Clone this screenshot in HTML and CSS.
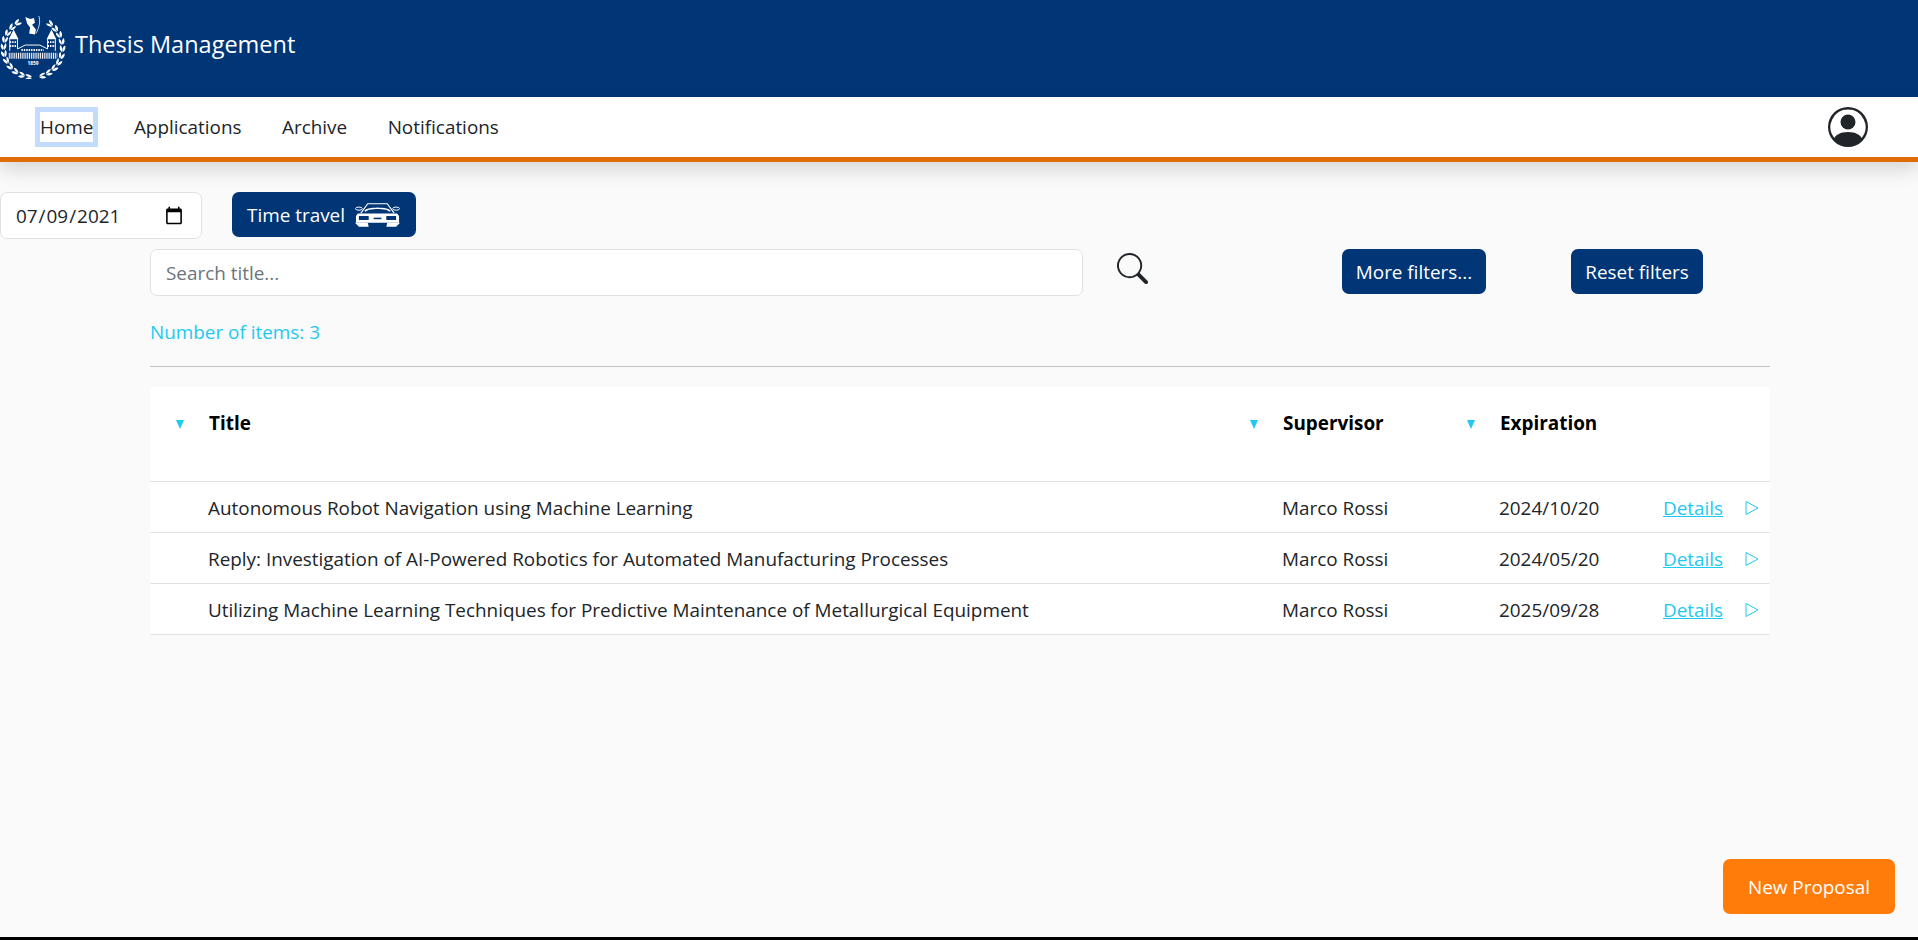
FILE: index.html
```html
<!DOCTYPE html>
<html lang="en">
<head>
  <meta charset="UTF-8">
  <meta name="viewport" content="width=device-width, initial-scale=1.0">
  <title>Thesis Management</title>
  <link rel="stylesheet" href="styles.css">
</head>

<body>
  <header class="brand-bar">
    <svg class="logo" viewBox="0 0 70 66" fill="none" stroke="#fff" aria-label="Logo">
      <defs>
        <path id="leaf" d="M34 3 C36.5 .4 39 .6 41 1.6 C39 4 36.5 4.4 34 3 Z M34 4 C36.5 3.6 39.5 4.4 41 6.4 C38.5 7.4 35.5 6.6 34 4 Z" fill="#fff" stroke="none"/>
      </defs>
      <!-- wreath -->
      <g>
        <use href="#leaf" transform="rotate(-38 34 34)"/>
        <use href="#leaf" transform="rotate(-52 34 34)"/>
        <use href="#leaf" transform="rotate(-66 34 34)"/>
        <use href="#leaf" transform="rotate(-80 34 34)"/>
        <use href="#leaf" transform="rotate(-94 34 34)"/>
        <use href="#leaf" transform="rotate(-108 34 34)"/>
        <use href="#leaf" transform="rotate(-122 34 34)"/>
        <use href="#leaf" transform="rotate(-136 34 34)"/>
        <use href="#leaf" transform="rotate(-150 34 34)"/>
        <use href="#leaf" transform="rotate(-164 34 34)"/>
        <use href="#leaf" transform="rotate(-178 34 34)"/>
        <use href="#leaf" transform="rotate(168 34 34) scale(-1 1) translate(-68 0)"/>
        <use href="#leaf" transform="rotate(154 34 34) scale(-1 1) translate(-68 0)"/>
        <use href="#leaf" transform="rotate(140 34 34) scale(-1 1) translate(-68 0)"/>
        <use href="#leaf" transform="rotate(126 34 34) scale(-1 1) translate(-68 0)"/>
        <use href="#leaf" transform="rotate(112 34 34) scale(-1 1) translate(-68 0)"/>
        <use href="#leaf" transform="rotate(98 34 34) scale(-1 1) translate(-68 0)"/>
        <use href="#leaf" transform="rotate(84 34 34) scale(-1 1) translate(-68 0)"/>
        <use href="#leaf" transform="rotate(70 34 34) scale(-1 1) translate(-68 0)"/>
        <use href="#leaf" transform="rotate(56 34 34) scale(-1 1) translate(-68 0)"/>
        <use href="#leaf" transform="rotate(42 34 34) scale(-1 1) translate(-68 0)"/>
      </g>
      <!-- figure on top -->
      <path d="M26 2 L31 4 L35 3 L36 8 L33 10 L37 15 L36 20 L30 19 L31 13 L28 9 Z" fill="#fff" stroke="none"/>
      <path d="M40 1 C41.5 6 41 12 37 19" stroke-width=".8"/>
      <!-- building -->
      <path d="M9 25 L14 15 L19 25 Z M48 25 L53 15 L58 25 Z" fill="#fff" stroke="none"/>
      <path d="M10 25 V37 M18 25 V35 L26 31 H41 L49 35 V25 M57 25 V37" stroke-width="1"/>
      <path d="M10 28 H18 M49 28 H57 M10 32 H18 M49 32 H57 M22 36 H45" stroke-width="2" stroke-dasharray="1.5 1"/>
      <path d="M9 42 H59" stroke-width="6" stroke-dasharray="1 .9"/>
      <text x="34" y="52" class="logo-year">1859</text>
    </svg>
    <span class="brand-name">Thesis Management</span>
  </header>

  <nav class="main-nav">
    <ul class="nav-links">
      <li><a class="nav-link active" href="#">Home</a></li>
      <li><a class="nav-link" href="#">Applications</a></li>
      <li><a class="nav-link" href="#">Archive</a></li>
      <li><a class="nav-link" href="#">Notifications</a></li>
    </ul>
    <svg class="user-icon" viewBox="0 0 16 16" fill="#212529" aria-label="Account">
      <path d="M11 6a3 3 0 1 1-6 0 3 3 0 0 1 6 0"/>
      <path fill-rule="evenodd" d="M0 8a8 8 0 1 1 16 0A8 8 0 0 1 0 8m8-7a7 7 0 0 0-5.468 11.37C3.242 11.226 4.805 10 8 10s4.757 1.225 5.468 2.37A7 7 0 0 0 8 1"/>
    </svg>
  </nav>

  <main class="content">
    <div class="time-row">
      <input class="form-input date-input" type="date" value="2021-07-09">
      <button class="btn time-btn" type="button">
        Time travel
        <svg class="car-icon" viewBox="0 0 48 26" fill="none" stroke="#fff" stroke-width="1.2" aria-hidden="true">
          <path d="M7 11 L14 1.5 H34 L41 11"/>
          <path d="M11 9 C16 5 20 7 24 6 C28 7 32 5 37 9" stroke-width="1.5"/>
          <ellipse cx="5" cy="6.5" rx="3.5" ry="1.6" stroke-width="1"/>
          <ellipse cx="43" cy="6.5" rx="3.5" ry="1.6" stroke-width="1"/>
          <path d="M4 11.5 H44 L46 14 V21 H2 V14 Z" fill="#fff" stroke="none"/>
          <path d="M5 14 H15 V18 H5 Z M33 14 H43 V18 H33 Z" fill="#003576" stroke="none"/>
          <path d="M20 16.5 H28" stroke="#003576" stroke-width="1.6"/>
          <path d="M1 21 H14 L15 25 H5 Z M34 21 H47 L43 25 H33 Z" fill="#fff" stroke="none"/>
        </svg>
      </button>
    </div>

    <div class="search-row">
      <input class="form-input search-input" type="text" placeholder="Search title...">
      <svg class="search-icon" viewBox="0 0 16 16" fill="#212529" aria-label="Search">
        <path d="M11.742 10.344a6.5 6.5 0 1 0-1.397 1.398h-.001q.044.06.098.115l3.85 3.85a1 1 0 0 0 1.415-1.414l-3.85-3.85a1 1 0 0 0-.115-.1zM12 6.5a5.5 5.5 0 1 1-11 0 5.5 5.5 0 0 1 11 0"/>
      </svg>
      <button class="btn more-btn" type="button">More filters...</button>
      <button class="btn reset-btn" type="button">Reset filters</button>
    </div>

    <p class="item-count">Number of items: 3</p>
    <hr class="divider">

    <section class="proposals">
      <div class="table-head">
        <div class="head-cell"><span class="sort-arrow"></span>Title</div>
        <div class="head-cell"><span class="sort-arrow"></span>Supervisor</div>
        <div class="head-cell"><span class="sort-arrow"></span>Expiration</div>
      </div>

      <div class="table-row">
        <span class="cell-title">Autonomous Robot Navigation using Machine Learning</span>
        <span>Marco Rossi</span>
        <span>2024/10/20</span>
        <span class="cell-actions"><a href="#">Details</a><svg class="play-icon" viewBox="0 0 14 16"><path d="M1 1.5 L13 8 L1 14.5 Z"/></svg></span>
      </div>
      <div class="table-row">
        <span class="cell-title">Reply: Investigation of AI-Powered Robotics for Automated Manufacturing Processes</span>
        <span>Marco Rossi</span>
        <span>2024/05/20</span>
        <span class="cell-actions"><a href="#">Details</a><svg class="play-icon" viewBox="0 0 14 16"><path d="M1 1.5 L13 8 L1 14.5 Z"/></svg></span>
      </div>
      <div class="table-row">
        <span class="cell-title">Utilizing Machine Learning Techniques for Predictive Maintenance of Metallurgical Equipment</span>
        <span>Marco Rossi</span>
        <span>2025/09/28</span>
        <span class="cell-actions"><a href="#">Details</a><svg class="play-icon" viewBox="0 0 14 16"><path d="M1 1.5 L13 8 L1 14.5 Z"/></svg></span>
      </div>
    </section>
  </main>

  <button class="new-proposal" type="button">New Proposal</button>
</body>
</html>
```

FILE: styles.css
```css
:root {
  --blue: #003576;
  --orange: #e06c08;
  --cyan: #1fc9f2;
  --text: #212529;
  --border: #dee2e6;
}

* {
  margin: 0;
  padding: 0;
  box-sizing: border-box;
}

html {
  background: #000;
}

body {
  font-family: "Open Sans", sans-serif;
  font-size: 18.9px;
  color: var(--text);
  background: #fafafa;
  height: 937px;
  overflow: hidden;
  position: relative;
}

.brand-bar {
  height: 97px;
  background: var(--blue);
  display: flex;
  align-items: center;
  padding-bottom: 3px;
}

.logo {
  width: 68px;
  height: 64px;
  margin-right: 7px;
  flex-shrink: 0;
}

.logo-year {
  fill: #fff;
  stroke: none;
  font-size: 5px;
  font-weight: 700;
  text-anchor: middle;
}

.brand-name {
  color: #fff;
  font-size: 23.5px;
  margin-bottom: 7px;
}

.main-nav {
  height: 65px;
  background: #fff;
  border-bottom: 5px solid var(--orange);
  box-shadow: 0 8px 18px rgba(0, 0, 0, 0.14);
  display: flex;
  align-items: center;
  justify-content: space-between;
  padding: 0 50px 0 40px;
  position: relative;
}

.nav-links {
  list-style: none;
  display: flex;
  gap: 40.5px;
}

.nav-link {
  display: block;
  color: var(--text);
  text-decoration: none;
  line-height: 30px;
}

.nav-link.active {
  outline: 5px solid #c3dbff;
}

.user-icon {
  width: 40px;
  height: 40px;
}

.content {
  padding-top: 30px;
}

.time-row {
  display: flex;
  gap: 30px;
}

.form-input {
  height: 47px;
  background: #fff;
  border: 1px solid var(--border);
  border-radius: 7px;
  font-family: inherit;
  font-size: 18.9px;
  color: var(--text);
  padding: 0 15px;
}

.date-input {
  width: 202px;
  padding: 0 17px 0 14px;
}

.date-input::-webkit-calendar-picker-indicator {
  width: 20px;
  height: 20px;
  margin: 0;
  padding: 0;
}

.btn {
  height: 45px;
  background: var(--blue);
  border: none;
  border-radius: 7px;
  color: #fff;
  font-family: inherit;
  font-size: 18.9px;
  padding: 0;
  white-space: nowrap;
}

.time-btn {
  width: 184px;
  display: flex;
  align-items: center;
  gap: 9px;
  padding: 1px 15px 0;
}

.car-icon {
  width: 47px;
  height: 26px;
}

.search-row {
  display: flex;
  align-items: flex-start;
  margin-top: 10px;
  padding-left: 150px;
}

.search-input {
  width: 933px;
}

.search-input::placeholder {
  color: #6c757d;
}

.search-icon {
  width: 31px;
  height: 31px;
  margin: 4px 0 0 34px;
}

.more-btn {
  width: 144px;
  margin-left: 194px;
}

.reset-btn {
  width: 132px;
  margin-left: 85px;
}

.item-count {
  color: var(--cyan);
  margin: 23px 0 0 150px;
  line-height: 26px;
}

.divider {
  border: none;
  border-top: 1px solid #c4c4c4;
  margin: 21px 148px 0 150px;
}

.proposals {
  background: #fff;
  margin: 20px 148px 0 150px;
}

.table-head {
  height: 95px;
  display: grid;
  grid-template-columns: 1074px 217px 1fr;
  padding: 20px 0 0 26px;
  border-bottom: 1px solid var(--border);
  font-weight: 700;
  color: #000;
}

.head-cell {
  display: flex;
  align-items: flex-start;
  line-height: 33px;
}

.sort-arrow {
  width: 0;
  height: 0;
  margin: 13px 25px 0 0;
  border-left: 4px solid transparent;
  border-right: 4px solid transparent;
  border-top: 9px solid var(--cyan);
}

.table-row {
  height: 51px;
  display: grid;
  grid-template-columns: 1132px 217px 164px 1fr;
  align-items: center;
  padding-top: 2px;
  border-bottom: 1px solid var(--border);
}

.cell-title {
  padding-left: 58px;
}

.cell-actions {
  display: flex;
  align-items: center;
  gap: 22px;
}

.cell-actions a {
  color: var(--cyan);
}

.play-icon {
  width: 14px;
  height: 16px;
  fill: none;
  stroke: var(--cyan);
  stroke-width: 1;
}

.new-proposal {
  position: absolute;
  right: 23px;
  bottom: 23px;
  width: 172px;
  height: 55px;
  background: #ff7c0a;
  border: none;
  border-radius: 7px;
  color: #fff;
  font-family: inherit;
  font-size: 18.9px;
}
```
